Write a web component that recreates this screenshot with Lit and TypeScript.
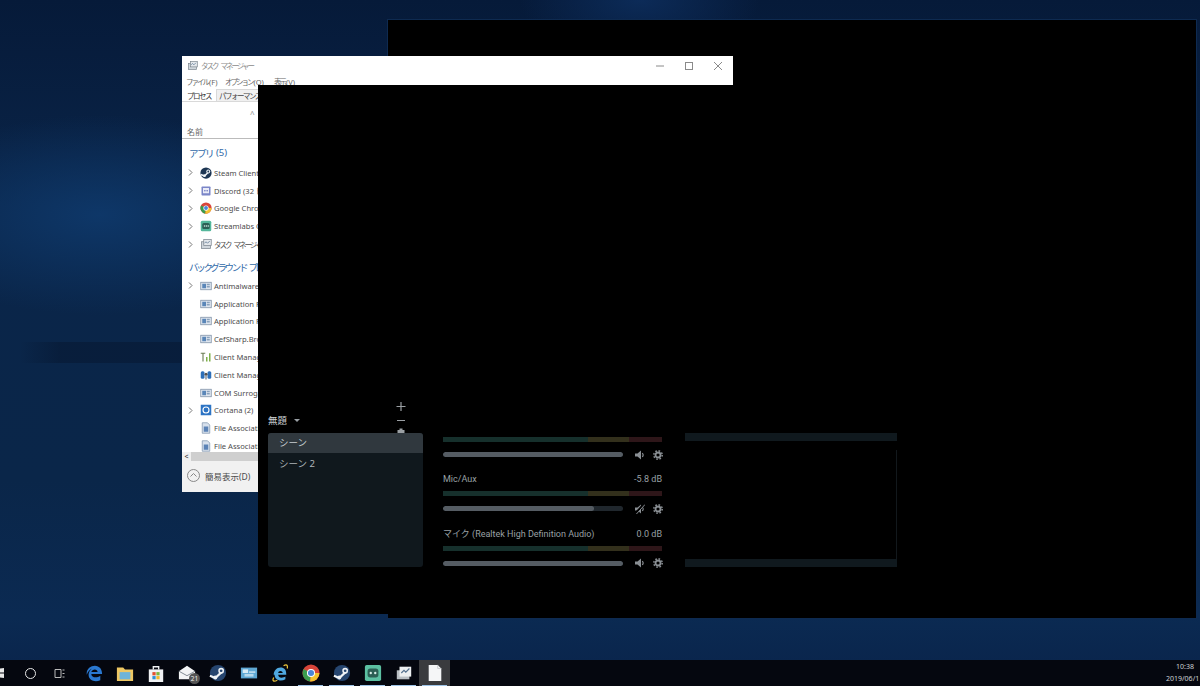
import { LitElement, html, css, svg } from 'lit';
import { customElement } from 'lit/decorators.js';

const gear = svg`<circle cx="5" cy="5" r="2.500" fill="none" stroke="currentColor" stroke-width="1.800"/><circle cx="5" cy="5" r="4.200" fill="none" stroke="currentColor" stroke-width="1.500" stroke-dasharray="1.650 1.650"/>`;

const speaker = svg`<path fill="currentColor" d="M0 3.500h2.500L6 .5v9l-3.500-3H0z"/><path fill="none" stroke="currentColor" stroke-width="1.100" d="M7.300 3a3 3 0 0 1 0 4"/>`;

const muted = svg`<path fill="currentColor" d="M0 3.500h2.500L6 .5v9l-3.500-3H0z"/><path fill="none" stroke="currentColor" stroke-width="1.100" d="M7.300 3a3 3 0 0 1 0 4"/><path stroke="#000" stroke-width="2.200" d="M0 10L9 0"/><path stroke="currentColor" stroke-width="1" d="M1 10.500L10 .5"/>`;

const box = svg`<rect x="1" y="3" width="14" height="10" fill="#dfe6ef" stroke="#7b8da3"/><rect x="3" y="5" width="5" height="6" fill="#5a86b8"/><rect x="9" y="5" width="4" height="2" fill="#8aa2bd"/><rect x="9" y="8" width="4" height="2" fill="#8aa2bd"/>`;

const taskIco = svg`<rect x="2" y="5" width="12" height="9" fill="#cfd6dc" stroke="#7d8790"/><rect x="5" y="2" width="10" height="8" fill="#e4e8ec" stroke="#7d8790"/><path d="M6 7l2-2 2 2 3-3" fill="none" stroke="#55728f"/>`;

const steam = svg`<circle cx="8" cy="8" r="7.500" fill="#1c3553"/><path d="M1 10l5 2 5-5" fill="none" stroke="#eef2f6" stroke-width="2"/><circle cx="11" cy="6" r="2.600" fill="#eef2f6"/><circle cx="11" cy="6" r="1.200" fill="#1c3553"/><circle cx="6" cy="11.500" r="1.800" fill="#eef2f6"/>`;

const discord = svg`<rect x="2" y="2" width="12" height="12" rx="1" fill="#7b86c8"/><rect x="4" y="4" width="8" height="7" fill="#e9ebf7"/><circle cx="6.500" cy="7.500" r="1" fill="#5e6ab5"/><circle cx="9.500" cy="7.500" r="1" fill="#5e6ab5"/>`;

const chrome = svg`<circle cx="8" cy="8" r="7.500" fill="#d9453a"/><path d="M8 8L1.500 4.500A7.500 7.500 0 0 0 7 15.500z" fill="#3a9c4e"/><path d="M8 8h7.400A7.500 7.500 0 0 1 7 15.500z" fill="#f3c22f"/><circle cx="8" cy="8" r="3.500" fill="#fff"/><circle cx="8" cy="8" r="2.600" fill="#4a86d8"/>`;

const streamlabs = svg`<rect x="1" y="1" width="14" height="14" rx="2" fill="#54b79b"/><rect x="3" y="4" width="10" height="8" rx="2" fill="#2c5f55"/><circle cx="6" cy="8" r="1" fill="#d8efe8"/><circle cx="8.500" cy="8" r="1" fill="#d8efe8"/><circle cx="11" cy="8" r="1" fill="#d8efe8"/>`;

const bars = svg`<path d="M1 3h6M4 3v11" stroke="#6d7f55" stroke-width="1.500" fill="none"/><rect x="8" y="8" width="2" height="6" fill="#7fb04a"/><rect x="12" y="3" width="2" height="11" fill="#7fb04a"/>`;

const radio = svg`<rect x="1" y="3" width="5" height="10" rx="2" fill="#2e6fb8"/><rect x="10" y="3" width="5" height="10" rx="2" fill="#2e6fb8"/><circle cx="8" cy="7" r="2" fill="#54504c"/><path d="M7 9h2v5H7z" fill="#8a8f96"/>`;

const cortana = svg`<rect x="1" y="1" width="14" height="14" fill="#2d74c4"/><circle cx="8" cy="8" r="4" fill="none" stroke="#fff" stroke-width="1.500"/>`;

const fileIco = svg`<path d="M3 1h7l3 3v11H3z" fill="#d7e0ec" stroke="#8296ae"/><rect x="5" y="6" width="6" height="7" fill="#5c83b6"/>`;

const edge = svg`<path d="M2 12C1 6 6 2 11 2c5 0 8 4 8 9H7c0 4 6 5 10 2v5c-6 3-13 0-13-6 0-3 2-6 4-7-3 1-5 4-6 7zm5-3h7c0-4-6-4-7 0z" fill="#2a78d0"/>`;

const folder = svg`<path d="M1 4h7l2 2h9v13H1z" fill="#eec763"/><rect x="4" y="9" width="12" height="8" fill="#6fb4d8"/>`;

const store = svg`<path d="M2 6h16v14H2z" fill="#f0f2f4"/><path d="M7 6V3h6v3" fill="none" stroke="#f0f2f4" stroke-width="1.500"/><rect x="6" y="9" width="3.600" height="3.600" fill="#e2502f"/><rect x="10.400" y="9" width="3.600" height="3.600" fill="#7db53c"/><rect x="6" y="13.400" width="3.600" height="3.600" fill="#2d8fd6"/><rect x="10.400" y="13.400" width="3.600" height="3.600" fill="#f2b92b"/>`;

const mail = svg`<path d="M1 8l9-6 9 6v9H1z" fill="#f3f4f5"/><path d="M1 8l9 5 9-5" fill="none" stroke="#77808a"/>`;

const steamBar = svg`<circle cx="10" cy="10" r="9" fill="#26456f"/><path d="M1 13l6 2.500L14 9" fill="none" stroke="#f0f3f6" stroke-width="2.400"/><circle cx="13.500" cy="7.500" r="3.200" fill="#f0f3f6"/><circle cx="13.500" cy="7.500" r="1.500" fill="#26456f"/><circle cx="7" cy="15" r="2.200" fill="#f0f3f6"/>`;

const rdp = svg`<rect x="1" y="4" width="18" height="12" fill="#5fa8d4"/><rect x="3" y="6" width="6" height="4" fill="#d8ebf5"/><rect x="10" y="8" width="7" height="2" fill="#b8d9ec"/><rect x="5" y="11" width="10" height="3" fill="#b8d9ec"/>`;

const ie = svg`<path d="M3 12C3 7 7 3 12 4c4 1 5 4 5 8H8c0 4 5 4 8 2v3c-5 3-12 1-12-5zm5-2h5c0-3-5-3-5 0z" fill="#4fa8e0"/><path d="M3 15C1 19 3 20 7 18M14 2c3-2 5-1 4 3" fill="none" stroke="#e8c23a" stroke-width="1.400"/>`;

const chromeBar = svg`<circle cx="10" cy="10" r="9.500" fill="#d9453a"/><path d="M10 10L1.800 5.500A9.500 9.500 0 0 0 9 19.500z" fill="#3a9c4e"/><path d="M10 10h9.400A9.500 9.500 0 0 1 9 19.500z" fill="#f3c22f"/><circle cx="10" cy="10" r="4.500" fill="#fff"/><circle cx="10" cy="10" r="3.400" fill="#4a86d8"/>`;

const slabsBar = svg`<rect x="1" y="1" width="18" height="18" rx="2" fill="#5cc0a2"/><rect x="4" y="5" width="12" height="10" rx="3" fill="#2c5f55"/><circle cx="7.500" cy="10" r="1.300" fill="#d8efe8"/><circle cx="12.500" cy="10" r="1.300" fill="#d8efe8"/>`;

const tmBar = svg`<rect x="2" y="7" width="14" height="10" fill="#b9bfc4"/><rect x="5" y="3" width="13" height="11" fill="#eceff1"/><path d="M7 10l3-3 2 2 4-4" fill="none" stroke="#55728f" stroke-width="1.300"/>`;

const doc = svg`<path d="M3 1h10l4 4v14H3z" fill="#f5f6f7"/><path d="M13 1v4h4" fill="none" stroke="#c9ccd0"/>`;

interface ProcRow { chevron: boolean; icon: unknown; label: string; ja?: boolean }

const apps: ProcRow[] = [
  { chevron: true, icon: steam, label: 'Steam Client' },
  { chevron: true, icon: discord, label: 'Discord (32 ビット)' },
  { chevron: true, icon: chrome, label: 'Google Chrome' },
  { chevron: true, icon: streamlabs, label: 'Streamlabs OBS' },
  { chevron: true, icon: taskIco, label: 'タスク マネージャー', ja: true },
];

const background: ProcRow[] = [
  { chevron: true, icon: box, label: 'Antimalware Service' },
  { chevron: false, icon: box, label: 'Application Frame' },
  { chevron: false, icon: box, label: 'Application Frame' },
  { chevron: false, icon: box, label: 'CefSharp.BrowserSub' },
  { chevron: false, icon: bars, label: 'Client Management' },
  { chevron: false, icon: radio, label: 'Client Management' },
  { chevron: false, icon: box, label: 'COM Surrogate' },
  { chevron: true, icon: cortana, label: 'Cortana (2)' },
  { chevron: false, icon: fileIco, label: 'File Association' },
  { chevron: false, icon: fileIco, label: 'File Association' },
];

const mixer = [
  { name: '', level: '', fill: 100, icon: speaker },
  { name: 'Mic/Aux', level: '-5.8 dB', fill: 84, icon: muted },
  { name: 'マイク (Realtek High Definition Audio)', level: '0.0 dB', fill: 100, icon: speaker },
];

const taskbarIcons = [edge, folder, store, mail, steamBar, rdp, ie, chromeBar, steamBar, slabsBar, tmBar];

@customElement('app-root')
export class AppRoot extends LitElement {
  static styles = css`
    :host {
      display: block;
      width: 1200px;
      height: 686px;
      overflow: hidden;
      font-family: 'Noto Sans', 'Noto Sans CJK JP', sans-serif;
    }
    .desktop {
      position: relative;
      width: 1200px;
      height: 686px;
      display: flex;
      flex-direction: column;
      background:
        linear-gradient(90deg, rgba(5, 18, 40, 0) 20px, rgba(5, 18, 40, 0.4) 60px, rgba(5, 18, 40, 0.4) 180px, rgba(5, 18, 40, 0) 260px) 0 342px / 100% 21px no-repeat,
        radial-gradient(ellipse 220px 100px at 100px 215px, #0e3768 0%, rgba(14, 55, 104, 0) 100%),
        radial-gradient(ellipse 120px 60px at 640px 0, #0c2b58 0%, rgba(12, 43, 88, 0) 100%),
        linear-gradient(180deg, #061a39 0%, #0a2549 30%, #0a2649 70%, #0b2a52 90%, #09234a 100%);
    }

    /* windows */
    .big {
      position: absolute;
      left: 388px;
      top: 20px;
      width: 808px;
      height: 598px;
      background: #000;
      box-shadow: 0 0 0 1px #0e2a50;
    }
    .tm {
      position: absolute;
      left: 182px;
      top: 56px;
      width: 551px;
      height: 436px;
      background: #fff;
      color: #4a4a4a;
      font-size: 8px;
      display: flex;
      flex-direction: column;
      overflow: hidden;
    }
    .obs {
      position: absolute;
      left: 258px;
      top: 85px;
      width: 650px;
      height: 529px;
      background: #000;
      display: flex;
      flex-direction: column;
      justify-content: flex-end;
      padding: 0 10px 47px;
      box-sizing: border-box;
    }

    /* task manager */
    .titlebar {
      height: 19px;
      display: flex;
      align-items: center;
      padding-left: 5px;
      gap: 3px;
      color: #8a8a8a;
      font-size: 7.500px;
      letter-spacing: -2px;
      word-spacing: 3px;
      flex: none;
    }
    .titlebar svg { width: 11px; height: 11px; }
    .winbtns { margin-left: auto; display: flex; }
    .winbtns svg { width: 29px; height: 10px; stroke: #8a8a8a; fill: none; }
    .menu { height: 12px; display: flex; padding-left: 4px; align-items: center; color: #666; font-size: 7.500px; flex: none; }
    .menu span { width: 39px; flex: none; white-space: nowrap; }
    .menu span + span { width: 49px; }
    .menu b { font-weight: 400; letter-spacing: -2px; margin-right: 1px; }
    .tabs { height: 15px; display: flex; padding-left: 5px; align-items: flex-end; font-size: 7.500px; letter-spacing: -1.500px; flex: none; color: #333; border-bottom: 1px solid #d9d9d9; box-sizing: border-box; }
    .tabs span { white-space: nowrap; }
    .tabs span.off { margin-left: 5px; padding: 0 0 0 2px; background: #f0f0f0; border: 1px solid #d9d9d9; border-bottom: 0; width: 60px; color: #444; }
    .columns { height: 37px; flex: none; display: flex; flex-direction: column; justify-content: flex-end; padding: 0 0 1px 5px; color: #666; font-size: 8px; border-bottom: 1px solid #bbb; box-sizing: border-box; }
    .caret { margin-left: 63px; line-height: 1; margin-bottom: 8px; color: #888; }
    .procs { flex: 1; min-height: 0; overflow: hidden; }
    .group { color: #2f69a8; font-size: 9.500px; padding: 2px 0 0 7px; height: 25px; box-sizing: border-box; display: flex; align-items: center; white-space: nowrap; }
    .group b { font-weight: 400; letter-spacing: -1.500px; margin-right: 3px; }
    .group.bg { margin-top: 4px; height: 20px; padding-top: 0; letter-spacing: -2.300px; word-spacing: 2px; }
    .row { height: 17.800px; display: flex; align-items: center; white-space: nowrap; color: #4c4c4c; font-size: 7.600px; }
    .row .ja { font-size: 7.500px; letter-spacing: -2px; word-spacing: 3px; }
    .chev { width: 18px; flex: none; padding-left: 6px; box-sizing: border-box; color: #777; }
    .chev svg { width: 5px; height: 7px; display: block; }
    .row > svg { width: 12px; height: 12px; flex: none; margin-right: 2px; }
    .hscroll { height: 9px; background: #cfcfcf; display: flex; flex: none; color: #333; font-size: 7px; line-height: 9px; }
    .hscroll span { width: 9px; background: #f0f0f0; text-align: center; }
    .tmfoot { height: 31px; background: #f1f1f1; display: flex; align-items: center; padding: 0 0 2px 5px; gap: 5px; color: #4a4a4a; font-size: 8.500px; flex: none; box-sizing: border-box; }
    .tmfoot svg { width: 13px; height: 13px; }

    /* obs */
    .panels { display: flex; align-items: flex-start; height: 160px; }
    .scenes { width: 155px; margin-right: 20px; flex: none; }
    .scene-head { height: 26px; position: relative; display: flex; align-items: center; color: #c9ced2; font-size: 9.500px; gap: 7px; }
    .scene-head i { width: 0; height: 0; border: 3px solid transparent; border-top: 3px solid #9aa0a5; margin-top: 3px; }
    .tools { position: absolute; right: 16px; top: -6px; width: 12px; color: #9a9fa3; }
    .tools svg { display: block; width: 12px; height: 40px; }
    .list { height: 134px; background: #10181d; border-radius: 3px; position: relative; color: #aeb4b8; font-size: 9.500px; }
    .scene { height: 20px; padding: 0 0 1px 11px; box-sizing: border-box; display: flex; align-items: center; }
    .scene.on { background: #30383e; border-radius: 3px 3px 0 0; color: #c9ced2; padding-bottom: 3px; }
    .mixer { width: 219px; margin-right: 23px; flex: none; padding-top: 30px; color: #9aa0a5; font-family: Roboto, 'Noto Sans CJK JP', sans-serif; font-size: 9px; }
    .strip { height: 54.500px; display: flex; flex-direction: column; }
    .strip:first-child { height: 32px; }
    .strip:first-child .mlabel { display: none; }
    .mlabel { display: flex; justify-content: space-between; height: 20px; align-items: center; white-space: nowrap; }
    .meter { height: 5px; margin-top: 2px; display: flex; flex: none; }
    .strip:first-child .meter { margin-top: 0; }
    .seg-g { flex: 144; background: #16302c; }
    .seg-y { flex: 41; background: #33301c; }
    .seg-r { flex: 33; background: #2e1619; }
    .controls { display: flex; align-items: center; margin-top: 7px; height: 11px; color: #8a8f94; }
    .slider { width: 180px; height: 5px; background: #20272d; border-radius: 3px; margin-right: 12px; flex: none; overflow: hidden; }
    .slider div { height: 100%; background: #555c63; border-radius: 3px; }
    .controls svg { width: 10px; height: 10px; flex: none; }
    .controls svg + svg { margin-left: 8px; }
    .preview { width: 212px; flex: none; margin-top: 26px; height: 134px; display: flex; flex-direction: column; }
    .preview .bar { height: 8px; background: #10191e; flex: none; }
    .preview .body { flex: 1; border-right: 1px solid #12181c; margin-top: 9px; }

    /* taskbar */
    .taskbar {
      height: 26px;
      background: #05070f;
      margin-top: auto;
      display: flex;
      align-items: center;
      flex: none;
      color: #c4c8cc;
      position: relative;
    }
    .start { width: 4px; height: 10px; margin-right: 21px; flex: none; }
    .cortana { width: 9px; height: 9px; border: 1.500px solid #e8e8e8; border-radius: 50%; margin-right: 18px; flex: none; }
    .tview { width: 11px; height: 9px; margin-right: 13px; flex: none; color: #bbb; }
    .apps { display: flex; align-items: center; height: 100%; }
    .app { width: 31px; height: 100%; display: flex; align-items: center; justify-content: center; position: relative; flex: none; }
    .app svg { width: 18px; height: 18px; }
    .app.run::after { content: ''; position: absolute; left: 3px; right: 3px; bottom: 0; height: 1px; background: #9ec4e8; }
    .app.active { background: #3a3b3e; }
    .badge { position: absolute; left: 18px; top: 13px; width: 11px; height: 11px; border-radius: 50%; background: #555; color: #eee; font-size: 6.500px; line-height: 11px; text-align: center; }
    .clock { position: absolute; left: 1166px; top: 1px; font-size: 7px; line-height: 12px; color: #cdd1d5; white-space: nowrap; }
    .clock span { display: block; padding-left: 10px; }
  `;

  private renderRow(r: ProcRow) {
    return html`<div class="row">
      <span class="chev">${r.chevron
        ? html`<svg viewBox="0 0 5 7"><path d="M1 .5L4 3.500 1 6.500" fill="none" stroke="currentColor" /></svg>`
        : ''}</span>
      <svg viewBox="0 0 16 16">${r.icon}</svg><span class=${r.ja ? 'ja' : ''}>${r.label}</span>
    </div>`;
  }

  private renderTaskManager() {
    return html`<div class="tm">
      <div class="titlebar">
        <svg viewBox="0 0 16 16">${taskIco}</svg>タスク マネージャー
        <div class="winbtns">
          <svg viewBox="0 0 29 10"><path d="M10 5h8" /></svg>
          <svg viewBox="0 0 29 10"><rect x="10.500" y="1.500" width="7" height="7" /></svg>
          <svg viewBox="0 0 29 10"><path d="M10 1l8 8M18 1l-8 8" /></svg>
        </div>
      </div>
      <div class="menu"><span><b>ファイル</b>(F)</span><span><b>オプション</b>(O)</span><span><b>表示</b>(V)</span></div>
      <div class="tabs"><span>プロセス</span><span class="off">パフォーマンス</span></div>
      <div class="columns"><span class="caret">^</span><span>名前</span></div>
      <div class="procs">
        <div class="group"><b>アプリ</b>(5)</div>
        ${apps.map((r) => this.renderRow(r))}
        <div class="group bg">バックグラウンド プロセス</div>
        ${background.map((r) => this.renderRow(r))}
      </div>
      <div class="hscroll"><span>&lt;</span></div>
      <div class="tmfoot">
        <svg viewBox="0 0 13 13"><circle cx="6.500" cy="6.500" r="6" fill="none" stroke="#888" /><path d="M3.500 7.500l3-3 3 3" fill="none" stroke="#888" /></svg>
        簡易表示(D)
      </div>
    </div>`;
  }

  private renderObs() {
    return html`<div class="obs">
      <div class="panels">
        <div class="scenes">
          <div class="scene-head">
            無題 <i></i>
            <div class="tools">
              <svg viewBox="0 0 12 40">
                <path d="M6 1v9M1.500 5.500h9M2 19.500h8" stroke="currentColor" stroke-width="1.200" fill="none" />
                <path d="M4.500 29h3v-1.500h-3zM2.500 29h7v11h-7z" fill="currentColor" />
              </svg>
            </div>
          </div>
          <div class="list">
            <div class="scene on">シーン</div>
            <div class="scene">シーン 2</div>
          </div>
        </div>
        <div class="mixer">
          ${mixer.map((m) => html`<div class="strip">
            <div class="mlabel"><span>${m.name}</span><span>${m.level}</span></div>
            <div class="meter"><div class="seg-g"></div><div class="seg-y"></div><div class="seg-r"></div></div>
            <div class="controls">
              <div class="slider"><div style="width:${m.fill}%"></div></div>
              <svg viewBox="0 0 10 10">${m.icon}</svg>
              <svg viewBox="0 0 10 10">${gear}</svg>
            </div>
          </div>`)}
        </div>
        <div class="preview">
          <div class="bar"></div>
          <div class="body"></div>
          <div class="bar"></div>
        </div>
      </div>
    </div>`;
  }

  render() {
    return html`<div class="desktop">
      <div class="big"></div>
      ${this.renderTaskManager()}
      ${this.renderObs()}
      <div class="taskbar">
        <svg class="start" viewBox="0 0 4 10"><path d="M0 .5L4 0v4.500H0zM0 5.500h4V10L0 9.500z" fill="#e8e8e8" /></svg>
        <div class="cortana"></div>
        <svg class="tview" viewBox="0 0 11 9"><path d="M1 .5h6v8H1zM8.500 1h2M8.500 4.500h2M8.500 8h2" fill="none" stroke="currentColor" /></svg>
        <div class="apps">
          ${taskbarIcons.map((icon, i) => html`<div class="app ${i >= 7 ? 'run' : ''}">
            <svg viewBox="0 0 20 20">${icon}</svg>
            ${i === 3 ? html`<span class="badge">21</span>` : ''}
          </div>`)}
          <div class="app active run"><svg viewBox="0 0 20 20">${doc}</svg></div>
        </div>
        <div class="clock"><span>10:38</span>2019/06/1</div>
      </div>
    </div>`;
  }
}
